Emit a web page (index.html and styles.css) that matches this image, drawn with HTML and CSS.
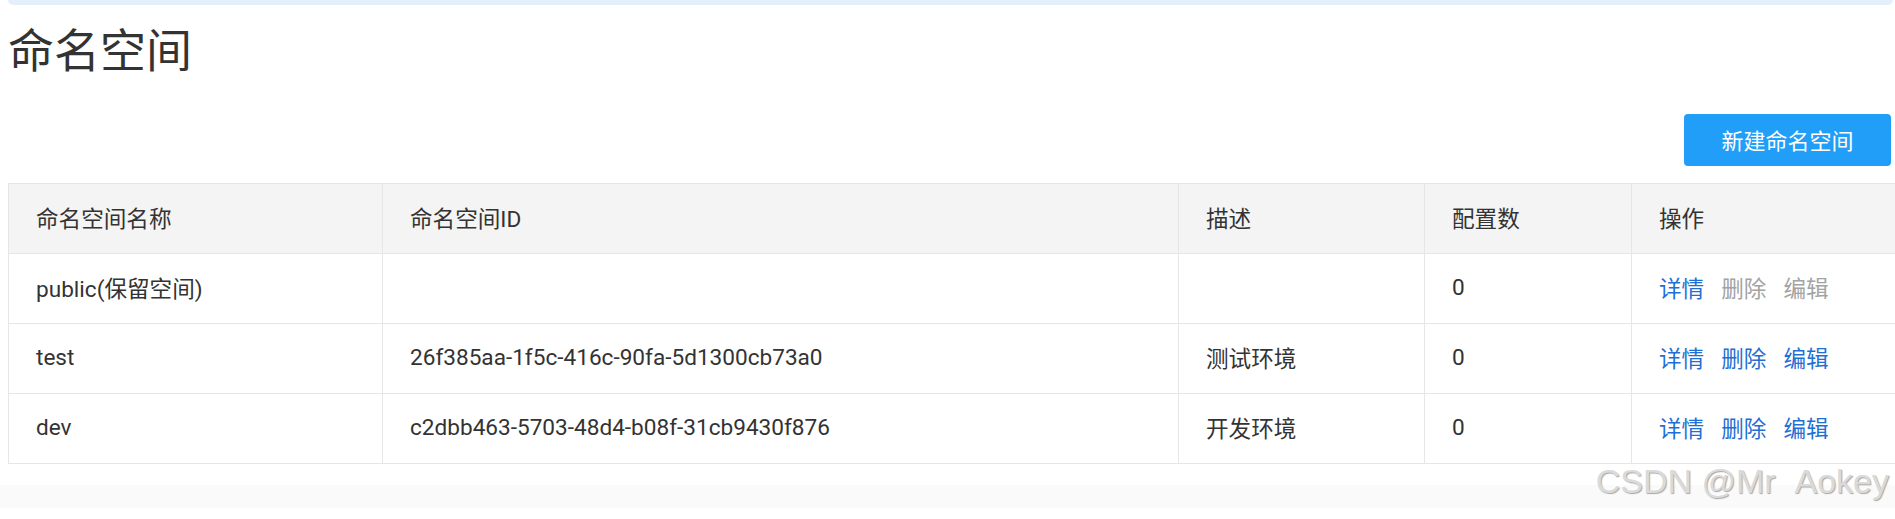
FILE: index.html
```html
<!DOCTYPE html>
<html lang="zh-CN">
<head>
<meta charset="utf-8">
<title>命名空间</title>
<link rel="stylesheet" href="styles.css">
</head>
<body>
<div class="page">
  <div class="topbar"></div>
  <h1 class="title">命名空间</h1>
  <div class="toolbar">
    <button class="btn-primary" type="button">新建命名空间</button>
  </div>
  <table class="ns-table">
    <colgroup>
      <col class="c1"><col class="c2"><col class="c3"><col class="c4"><col class="c5">
    </colgroup>
    <thead>
      <tr><th>命名空间名称</th><th>命名空间ID</th><th>描述</th><th>配置数</th><th>操作</th></tr>
    </thead>
    <tbody>
      <tr>
        <td>public(保留空间)</td><td></td><td></td><td>0</td>
        <td><a class="op">详情</a><a class="op disabled">删除</a><a class="op disabled">编辑</a></td>
      </tr>
      <tr>
        <td>test</td><td>26f385aa-1f5c-416c-90fa-5d1300cb73a0</td><td>测试环境</td><td>0</td>
        <td><a class="op">详情</a><a class="op">删除</a><a class="op">编辑</a></td>
      </tr>
      <tr>
        <td>dev</td><td>c2dbb463-5703-48d4-b08f-31cb9430f876</td><td>开发环境</td><td>0</td>
        <td><a class="op">详情</a><a class="op">删除</a><a class="op">编辑</a></td>
      </tr>
    </tbody>
  </table>
  <div class="footer-strip"></div>
  <div class="watermark">CSDN @Mr&nbsp;&nbsp;Aokey</div>
</div>
</body>
</html>
```

FILE: styles.css
```css
html, body {
  margin: 0;
  padding: 0;
  background: #ffffff;
}
body {
  width: 1895px;
  height: 519px;
  overflow: hidden;
  font-family: Roboto, "Noto Sans CJK SC", sans-serif;
  color: #333333;
}
.page {
  position: relative;
  height: 519px;
}
.topbar {
  height: 5px;
  margin: 0 2px 0 8px;
  background: #e3f0fc;
  border-radius: 0 0 5px 5px;
}
.title {
  margin: 15px 0 0 8px;
  font-family: "Noto Sans CJK SC", sans-serif;
  font-size: 46px;
  line-height: 54px;
  font-weight: 400;
  color: #333333;
}
.toolbar {
  display: flex;
  justify-content: flex-end;
  margin-top: 40px;
  padding-right: 4px;
}
.btn-primary {
  width: 207px;
  height: 52px;
  border: none;
  border-radius: 4px;
  background: #209ef8;
  color: #ffffff;
  font-family: "Noto Sans CJK SC", sans-serif;
  font-size: 22px;
  padding: 0 0 2px 0;
  cursor: pointer;
}
.ns-table {
  margin: 17px 0 0 8px;
  width: 1888px;
  border-collapse: collapse;
  table-layout: fixed;
  font-size: 22.6px;
}
.c1 { width: 374px; }
.c2 { width: 796px; }
.c3 { width: 246px; }
.c4 { width: 207px; }
.c5 { width: 265px; }
.ns-table th,
.ns-table td {
  height: 66px;
  padding: 0 0 3px 27px;
  border: 1px solid #e6e6e6;
  text-align: left;
  vertical-align: middle;
  white-space: nowrap;
}
.ns-table th {
  background: #f4f4f4;
  font-weight: 400;
  color: #333333;
}
.ns-table td {
  color: #333333;
}
.op {
  color: #1f6fd4;
  margin-right: 17px;
  cursor: pointer;
}
.op.disabled {
  color: #a3a3a3;
}
.footer-strip {
  height: 23px;
  margin-top: 21px;
  background: #fafafa;
}
.watermark {
  position: absolute;
  right: 6px;
  bottom: 20px;
  font-family: "Liberation Sans", Arial, sans-serif;
  font-size: 34px;
  line-height: 36px;
  color: #dadada;
  text-shadow: 1px 1px 1px #a8a8a8, -1px -1px 0 #ffffff;
}
```
